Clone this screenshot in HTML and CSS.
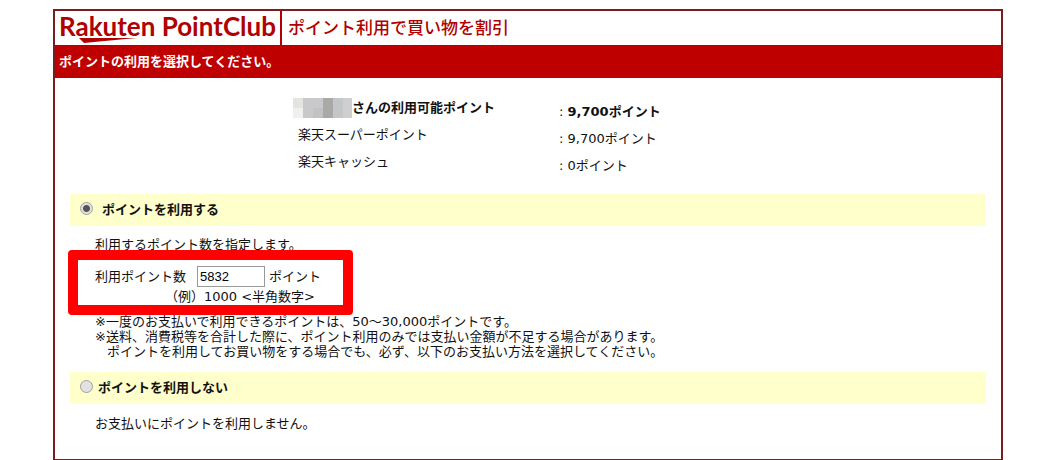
FILE: index.html
```
<!DOCTYPE html>
<html lang="ja">
<head>
  <meta charset="UTF-8">
  <title>ポイント利用で買い物を割引</title>
  <link rel="stylesheet" href="styles.css">
</head>
<body>

  <div class="container">
    <header class="header">
      <div class="logo">
        <span class="logo-text">Rakuten PointClub</span>
        <svg class="logo-swoosh" width="58" height="5" viewBox="0 0 58 5" aria-hidden="true"><path d="M0 0H58Q36 2 5 5Z" fill="#b00000"/></svg>
      </div>
      <h1>ポイント利用で買い物を割引</h1>
    </header>
    <p class="message">ポイントの利用を選択してください。</p>

    <form class="content">
      <div class="balance">
        <div class="balance-names">
          <div class="user">
            <svg class="mosaic" width="59" height="20" viewBox="0 0 59 20" shape-rendering="crispEdges" aria-hidden="true">
              <path fill="#e4e4e1" d="M0 0h10v10H0z"/>
              <path fill="#f0f0ee" d="M0 10h10v10H0z"/>
              <path fill="#c9c9cb" d="M10 0h20v20H10z"/>
              <path fill="#c2c2c4" d="M20 10h10v10H20z"/>
              <path fill="#a9a9a7" d="M30 0h10v20H30z"/>
              <path fill="#c4c7c7" d="M40 0h10v20H40z"/>
              <path fill="#cfcfd1" d="M50 0h9v20h-9z"/>
            </svg>
            <b>さんの利用可能ポイント</b>
          </div>
          <div class="kind">楽天スーパーポイント</div>
          <div class="kind">楽天キャッシュ</div>
        </div>
        <div class="balance-values">
          <div>: <b>9,700ポイント</b></div>
          <div>: 9,700ポイント</div>
          <div>: 0ポイント</div>
        </div>
      </div>

      <div class="choice choice-use">
        <input type="radio" name="use" id="use-yes" checked>
        <label for="use-yes">ポイントを利用する</label>
      </div>
      <div class="detail">
        <p>利用するポイント数を指定します。</p>
        <div class="amount">
          <label for="point">利用ポイント数</label>
          <input type="text" id="point" value="5832">
          <span>ポイント</span>
          <div class="highlight"></div>
        </div>
        <p class="example">（例）1000 &lt;半角数字&gt;</p>
        <ul class="notes">
          <li>※一度のお支払いで利用できるポイントは、50～30,000ポイントです。</li>
          <li>※送料、消費税等を合計した際に、ポイント利用のみでは支払い金額が不足する場合があります。</li>
          <li class="indent">ポイントを利用してお買い物をする場合でも、必ず、以下のお支払い方法を選択してください。</li>
        </ul>
      </div>

      <div class="choice">
        <input type="radio" name="use" id="use-no">
        <label for="use-no">ポイントを利用しない</label>
      </div>
      <p class="no-use">お支払いにポイントを利用しません。</p>
    </form>
  </div>

</body>
</html>
```

FILE: styles.css
```
* {
  box-sizing: border-box;
}

body {
  margin: 0;
  font-family: "DejaVu Sans", "Noto Sans CJK JP", sans-serif;
  font-size: 13px;
  line-height: 20px;
  background: #fff;
  color: #111;
}

p, h1, ul {
  margin: 0;
  padding: 0;
}

.container {
  margin: 9px 57px 0 53px;
  border: 2px solid #7a1c20;
  border-bottom-width: 1px;
}

.header {
  display: flex;
  height: 34px;
  color: #b00000;
}

.logo {
  position: relative;
  padding: 0 4px;
  border-right: 2px solid #b00000;
}

.logo-text {
  font-family: Lato, sans-serif;
  font-size: 26px;
  font-weight: 700;
  line-height: 31px;
}

.logo-swoosh {
  position: absolute;
  left: 24px;
  top: 27px;
}

.header h1 {
  padding-left: 6px;
  font-family: "Noto Sans CJK JP", sans-serif;
  font-size: 17px;
  font-weight: 500;
  line-height: 32px;
}

.message {
  padding: 0 4px;
  background: #bf0000;
  border-top: 1px solid #8c1014;
  border-bottom: 1px solid #8c1014;
  color: #fff;
  font-weight: bold;
  line-height: 31px;
}

.content {
  padding: 16px 15px;
}

.balance {
  display: flex;
  gap: 64px;
  padding-left: 223px;
  line-height: 27px;
}

.user {
  display: flex;
  align-items: center;
}

.kind {
  padding-left: 5px;
}

.balance-values {
  padding-top: 4px;
}

.choice {
  display: flex;
  align-items: center;
  gap: 5px;
  height: 32px;
  padding-left: 10px;
  background: #ffffcc;
  font-weight: bold;
}

.choice-use {
  gap: 9px;
  margin-top: 15px;
}

.choice input {
  appearance: none;
  width: 13px;
  height: 13px;
  margin: 0 0 4px;
  border: 1px solid #a0a0a0;
  border-radius: 50%;
  background: #e2e2e2;
}

.choice input:checked {
  background: radial-gradient(circle, #555 0 3px, #e2e2e2 4px);
}

.detail {
  padding: 9px 0 13px 25px;
}

.amount {
  position: relative;
  display: flex;
  align-items: center;
  margin-top: 11px;
}

.amount input {
  width: 68px;
  height: 21px;
  margin: 0 4px 0 11px;
  padding: 1px 2px;
  border: 1px solid #999;
  font-family: "Liberation Sans", Arial, sans-serif;
  font-size: 13px;
}

/* red frame over the amount row */
.highlight {
  position: absolute;
  left: -27px;
  top: -16px;
  width: 285px;
  height: 65px;
  border: 10px solid #ff0000;
  border-radius: 4px;
  pointer-events: none;
}

.example {
  padding-left: 70px;
}

.notes {
  margin-top: 7px;
  list-style: none;
  line-height: 15px;
}

.indent {
  padding-left: 12px;
}

.no-use {
  padding: 10px 0 9px 25px;
}
```
